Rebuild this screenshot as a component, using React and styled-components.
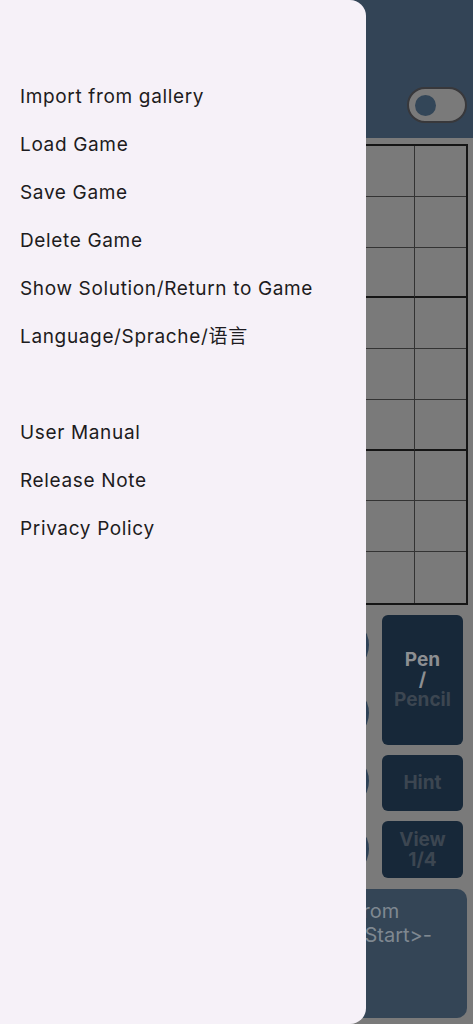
import React from "react";
import styled, { createGlobalStyle } from "styled-components";

const GlobalStyle = createGlobalStyle`
  html, body {
    margin: 0;
    padding: 0;
    background: #7a7a7a;
  }
  * {
    box-sizing: border-box;
  }
`;

const Screen = styled.div`
  position: relative;
  width: 473px;
  height: 1024px;
  overflow: hidden;
  background: #7a7a7a;
  font-family: Inter, "Noto Sans", sans-serif;
`;

const Header = styled.div`
  height: 138px;
  background: #334456;
  display: flex;
  align-items: flex-start;
  justify-content: flex-end;
  padding: 87px 6px 0 0;
`;

const Toggle = styled.div`
  width: 60px;
  height: 36px;
  border-radius: 18px;
  border: 2px solid #38383b;
  background: #7a7a7a;
  display: flex;
  align-items: center;
  padding-left: 6px;
`;

const Knob = styled.div`
  width: 21px;
  height: 21px;
  border-radius: 50%;
  background: #334658;
`;

const Board = styled.div`
  margin: 6px 5px 0 8px;
  width: 460px;
  height: 461px;
  border: 2px solid #151515;
  display: grid;
  grid-template-columns: repeat(9, 1fr);
  grid-template-rows: repeat(9, 1fr);
`;

const Cell = styled.div`
  border-right: ${(p) => (p.$col % 3 === 2 ? "2px solid #151515" : "1px solid #333")};
  border-bottom: ${(p) => (p.$row % 3 === 2 ? "2px solid #151515" : "1px solid #333")};
  ${(p) => p.$col === 8 && "border-right: none;"}
  ${(p) => p.$row === 8 && "border-bottom: none;"}
`;

const Controls = styled.div`
  display: flex;
  justify-content: space-between;
  margin: 10px 10px 0 6px;
  height: 264px;
`;

const Pad = styled.div`
  display: grid;
  grid-template-columns: repeat(5, 56px);
  grid-auto-rows: 56px;
  column-gap: 16px;
  row-gap: 12px;
  padding-top: 2px;
  margin-left: 19px;
`;

const PadKey = styled.div`
  width: 56px;
  height: 56px;
  border-radius: 50%;
  background: #2e4156;
`;

const Side = styled.div`
  width: 81px;
  display: flex;
  flex-direction: column;
  gap: 10px;
`;

const Action = styled.div`
  height: ${(p) => p.$h}px;
  border-radius: 6px;
  background: #172839;
  display: flex;
  flex-direction: column;
  align-items: center;
  justify-content: center;
  font-family: Inter, "Noto Sans", sans-serif;
  font-weight: 700;
  font-size: 19px;
  line-height: 20px;
  color: #3c4651;
  text-align: center;
`;

const Bright = styled.span`
  color: #8d8f92;
`;

const Panel = styled.div`
  margin: 10px 6px 0 6px;
  height: 129px;
  border-radius: 10px;
  background: #344556;
  padding: 10px 0 0 0;
  font-size: 20px;
  line-height: 24px;
  color: #7f8891;
  font-family: Inter, "Noto Sans", sans-serif;
`;

const PanelLine = styled.div`
  padding-left: ${(p) => p.$indent}px;
  white-space: nowrap;
`;

const Drawer = styled.nav`
  position: absolute;
  top: 0;
  left: 0;
  width: 366px;
  height: 1024px;
  background: #f6f1f8;
  border-radius: 0 16px 16px 0;
  padding-top: 73px;
`;

const Item = styled.div`
  height: 48px;
  display: flex;
  align-items: center;
  padding-left: 20px;
  font-family: Inter, "Noto Sans", "Noto Sans CJK SC", sans-serif;
  font-size: 19px;
  line-height: 24px;
  letter-spacing: 0.65px;
  color: #1d1b20;
`;

const Spacer = styled.div`
  height: 48px;
`;

const topItems = [
  "Import from gallery",
  "Load Game",
  "Save Game",
  "Delete Game",
  "Show Solution/Return to Game",
  "Language/Sprache/语言",
];

const bottomItems = ["User Manual", "Release Note", "Privacy Policy"];

export default function App() {
  const cells = [];
  for (let r = 0; r < 9; r++) {
    for (let c = 0; c < 9; c++) {
      cells.push(<Cell key={`${r}-${c}`} $row={r} $col={c} />);
    }
  }

  return (
    <Screen>
      <GlobalStyle />
      <Header>
        <Toggle>
          <Knob />
        </Toggle>
      </Header>
      <Board>{cells}</Board>
      <Controls>
        <Pad>
          {Array.from({ length: 20 }).map((_, i) => (
            <PadKey key={i} />
          ))}
        </Pad>
        <Side>
          <Action $h={130}>
            <Bright>Pen</Bright>
            <Bright>/</Bright>
            <span>Pencil</span>
          </Action>
          <Action $h={56}>Hint</Action>
          <Action $h={57}>
            <span>View</span>
            <span>1/4</span>
          </Action>
        </Side>
      </Controls>
      <Panel>
        <PanelLine $indent={35}>Scan a Sudoku or import a game from</PanelLine>
        <PanelLine $indent={85}>the gallery, then press the -&lt;Start&gt;-</PanelLine>
      </Panel>
      <Drawer>
        {topItems.map((t) => (
          <Item key={t}>{t}</Item>
        ))}
        <Spacer />
        {bottomItems.map((t) => (
          <Item key={t}>{t}</Item>
        ))}
      </Drawer>
    </Screen>
  );
}
